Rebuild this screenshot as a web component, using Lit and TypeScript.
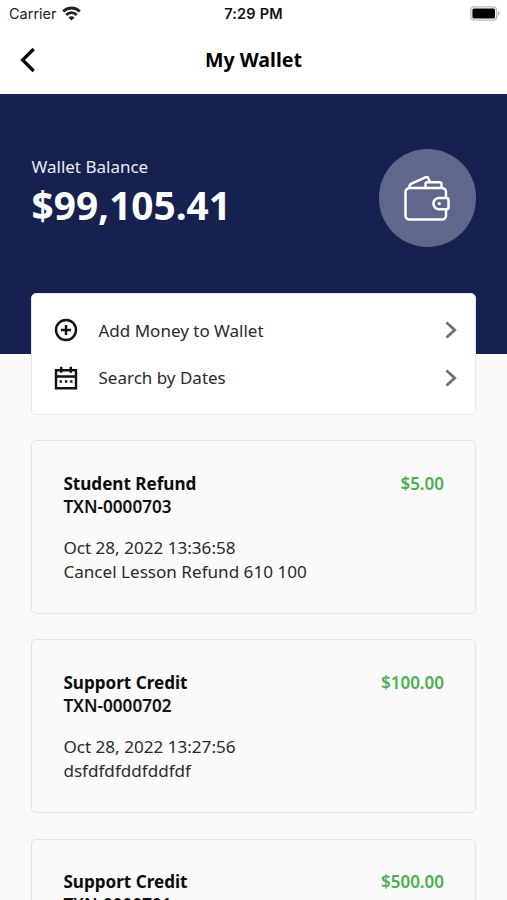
import { LitElement, html, css, svg, nothing } from "lit";
import { customElement, property } from "lit/decorators.js";

interface Transaction {
  title: string;
  id: string;
  amount: string;
  date?: string;
  note?: string;
}

const transactions: Transaction[] = [
  { title: "Student Refund", id: "TXN-0000703", amount: "$5.00", date: "Oct 28, 2022 13:36:58", note: "Cancel Lesson Refund 610 100" },
  { title: "Support Credit", id: "TXN-0000702", amount: "$100.00", date: "Oct 28, 2022 13:27:56", note: "dsfdfdfddfddfdf" },
  { title: "Support Credit", id: "TXN-0000701", amount: "$500.00" },
];

const plusIcon = svg`<circle cx="12" cy="12" r="10"/><path d="M12 7v10M7 12h10"/>`;
const calendarIcon = svg`<path d="M2 4.200h20v18H2zM2 10.500h20M7.200 .8v6M16.800 .8v6"/><path d="M5.600 15.500h2.300M10.900 15.500h2.300M16.200 15.500h2.300"/>`;

@customElement("transaction-card")
class TransactionCard extends LitElement {
  @property({ attribute: false }) item!: Transaction;

  static styles = css`
    :host {
      display: block;
      box-sizing: border-box;
      height: 174px;
      padding: 30.5px 31px 30.5px 31.4px;
      border: 1px solid #e5e5e6;
      border-radius: 5px;
      font-size: 17.1px;
      line-height: 23.3px;
      color: #2b2b2b;
    }
    .head { display: flex; justify-content: space-between; }
    .title { font-weight: 700; color: #0c0c0c; }
    .id { font-weight: 600; color: #111; }
    .amount { font-weight: 600; font-size: 17px; color: #4caf50; }
    .details { margin-top: 18px; }
  `;

  render() {
    const { title, id, amount, date, note } = this.item;
    return html`
      <div class="head">
        <span class="title">${title}</span>
        <span class="amount">${amount}</span>
      </div>
      <div class="id">${id}</div>
      ${date ? html`<div class="details"><div>${date}</div><div>${note}</div></div>` : nothing}
    `;
  }
}

@customElement("app-root")
class AppRoot extends LitElement {
  static styles = css`
    :host {
      display: block;
      height: 900px;
      overflow: hidden;
      background: #fafafa;
      font-family: "Noto Sans", sans-serif;
    }
    * { box-sizing: border-box; }
    svg { display: block; fill: none; stroke: currentColor; }
    .status {
      display: grid;
      grid-template-columns: 1fr auto 1fr;
      align-items: center;
      height: 27px;
      padding: 0 7px 0 9px;
      background: #fff;
      font-family: Inter, sans-serif;
      font-size: 14.5px;
      color: #222;
    }
    .carrier { display: flex; align-items: center; gap: 5px; }
    .time { margin-right: 2px; font-weight: 600; letter-spacing: 0.2px; color: #111; }
    .battery { justify-self: end; }
    .nav {
      display: grid;
      grid-template-columns: 48px 1fr 48px;
      align-items: center;
      height: 67px;
      padding: 0 20px 2px;
      background: #fff;
      color: #000;
    }
    .title {
      margin: 0;
      text-align: center;
      font-size: 19.6px;
      line-height: 27px;
      font-weight: 700;
    }
    .hero {
      display: flex;
      justify-content: space-between;
      height: 260px;
      padding: 55px 31px 0 31.5px;
      background: #162150;
      color: #fff;
    }
    .label { margin-top: 6px; font-size: 17px; line-height: 24px; color: #e9ebf5; }
    .amount { font-size: 38.800px; line-height: 52px; font-weight: 700; }
    .badge {
      display: grid;
      place-items: center;
      width: 97.5px;
      height: 97.5px;
      border-radius: 50%;
      background: #60678a;
    }
    .content { display: flex; flex-direction: column; gap: 25.2px; margin: -61px 31px 0; }
    .actions {
      position: relative;
      height: 122px;
      padding: 12.500px 18px 0 21.500px;
      border: 1px solid #e8e8ea;
      border-radius: 5px;
      background: #fff;
    }
    .action {
      display: flex;
      align-items: center;
      height: 47.600px;
      color: #111;
    }
    .text { flex: 1; margin-left: 21px; font-size: 17px; color: #2b2b2b; }
    .chevron { color: #707070; }
  `;

  private action(icon: unknown, text: string) {
    return html`
      <div class="action">
        <svg width="24" height="24" viewBox="0 0 24 24" stroke-width="2.4">${icon}</svg>
        <span class="text">${text}</span>
        <svg class="chevron" width="12" height="18" viewBox="0 0 12 18" stroke-width="2.8"><path d="M1.500 1.500L9.700 9l-8.200 7.500"/></svg>
      </div>
    `;
  }

  render() {
    return html`
      <div class="status">
        <div class="carrier">
          <span>Carrier</span>
          <svg width="19" height="15" viewBox="0 0 19 15" stroke-width="2.8">
            <path d="M1.200 5.500C5.800 .8 13.200 .8 17.800 5.500M4.200 8.900c3-2.900 7.600-2.900 10.600 0"/>
            <path d="M6.400 11.400c1.800-1.600 4.400-1.600 6.200 0l-3.100 3.200z" fill="currentColor" stroke="none"/>
          </svg>
        </div>
        <span class="time">7:29 PM</span>
        <svg class="battery" width="30" height="15" viewBox="0 0 30 15">
          <rect x=".8" y=".9" width="25.800" height="13.200" rx="3.400" stroke="#bbb" stroke-width="1.4"/>
          <rect x="2.400" y="2.600" width="22.600" height="9.800" rx="1.500" fill="#000" stroke="none"/>
          <path d="M28 5.300c2 .7 2 3.700 0 4.400z" fill="#aaa" stroke="none"/>
        </svg>
      </div>
      <div class="nav">
        <svg width="16" height="26" viewBox="0 0 16 26" stroke-width="3.2"><path d="M13.700 2L2.600 13l11.100 11"/></svg>
        <h1 class="title">My Wallet</h1>
      </div>
      <div class="hero">
        <div>
          <div class="label">Wallet Balance</div>
          <div class="amount">$99,105.41</div>
        </div>
        <div class="badge">
          <svg width="46" height="46" viewBox="0 0 46 46" stroke-width="2.5" stroke-linejoin="round">
            <path d="M42 22.500V17a4 4 0 0 0-4-4H5.500a4 4 0 0 0-4 4v23.500a4 4 0 0 0 4 4H38a4 4 0 0 0 4-4V34"/>
            <path d="M42.500 23H35a5.600 5.600 0 0 0 0 11.200h7.500a2 2 0 0 0 2-2V25a2 2 0 0 0-2-2z"/>
            <path d="M5.500 13v-1.500a3 3 0 0 1 2-2.800L22 2.200q1.500-.7 2.200.8l1.600 3.500M21.500 13V9.200a2 2 0 0 1 2-2h12a2 2 0 0 1 2 2V13"/>
            <circle cx="35.300" cy="28.600" r="1.600" fill="currentColor" stroke="none"/>
          </svg>
        </div>
      </div>
      <div class="content">
        <div class="actions">
          ${this.action(plusIcon, "Add Money to Wallet")}
          ${this.action(calendarIcon, "Search by Dates")}
        </div>
        ${transactions.map((t) => html`<transaction-card .item=${t}></transaction-card>`)}
      </div>
    `;
  }
}
